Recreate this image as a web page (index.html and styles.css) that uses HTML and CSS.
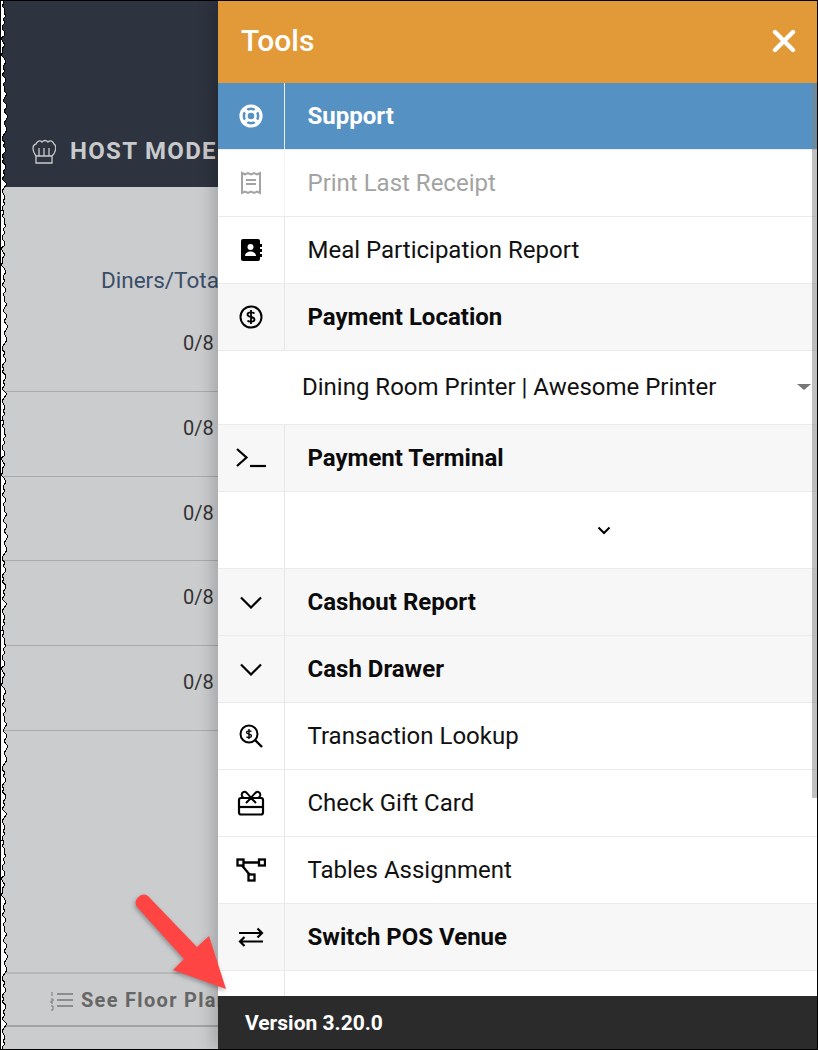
FILE: index.html
```html
<!DOCTYPE html>
<html lang="en">
<head>
<meta charset="utf-8">
<title>Tools</title>
<link rel="stylesheet" href="styles.css">
</head>
<body>
<div class="shot">
  <div class="page">
    <header class="page-head">
      <svg class="chef" viewBox="0 0 24 25" width="24" height="25" fill="none" stroke="#c9cacc" stroke-width="1.3"><path d="M4 17C0 12 0 6 4 5c1-3 4-4 6-2 2-2 4-2 6 0 2-2 5-1 6 2 3 2 2 8-2 12"/><path d="M4 17h16v7H4zM7 9v8M12 9v8M17 9v8"/></svg>
      <span class="mode">HOST MODE</span>
    </header>
    <main class="table">
      <div class="col-title">Diners/Total</div>
      <div class="t-row">0/8</div>
      <div class="t-row">0/8</div>
      <div class="t-row">0/8</div>
      <div class="t-row">0/8</div>
      <div class="t-row">0/8</div>
    </main>
    <footer class="floor">
      <svg viewBox="0 0 24 22" width="24" height="22" fill="none" stroke="#777" stroke-width="1.4"><path d="M7 5h16M7 11h16M7 17h16"/><path d="M2 3v4M1 10h2v2H1v2h2M1 17h2v4H1" stroke-width="1"/></svg>
      <span class="floor-label">See Floor Plan</span>
    </footer>
  </div>

  <aside class="panel">
    <div class="panel-head">
      <span class="panel-title">Tools</span>
      <svg class="close" viewBox="0 0 24 24" width="24" height="24" fill="none" stroke="#fff" stroke-width="4.4" stroke-linecap="round"><path d="M3 3l18 18M21 3L3 21"/></svg>
    </div>
    <div class="list">
      <div class="row active">
        <div class="ico"><svg viewBox="0 0 24 24" width="24" height="24" fill="none" stroke="#fff"><circle cx="12" cy="12" r="10" stroke-width="3.200"/><circle cx="12" cy="12" r="4.600" stroke-width="2.600"/><path d="M4.500 4.500l4 4M19.500 4.500l-4 4M4.500 19.500l4-4M19.500 19.500l-4-4" stroke-width="3.400"/></svg></div>
        <div class="lab">Support</div>
      </div>
      <div class="row disabled">
        <div class="ico"><svg viewBox="0 0 24 24" width="24" height="24" fill="none" stroke="#a3a3a3" stroke-width="2"><path d="M3 2l3 1.500 3-1.500 3 1.500 3-1.500 3 1.500 3-1.500v20l-3-1.500-3 1.500-3-1.500-3 1.500-3-1.500-3 1.500z"/><path d="M7 9h10M7 13h10" stroke-width="1.800"/></svg></div>
        <div class="lab">Print Last Receipt</div>
      </div>
      <div class="row">
        <div class="ico"><svg viewBox="0 0 24 24" width="24" height="24"><path d="M4 1h15a2 2 0 0 1 2 2v18a2 2 0 0 1-2 2H4a2 2 0 0 1-2-2V3a2 2 0 0 1 2-2z" fill="#000"/><path d="M21 6h2v3h-2zM21 11h2v3h-2zM21 16h2v3h-2z" fill="#000"/><circle cx="11.500" cy="9" r="3" fill="#fff"/><path d="M6 18c0-6 11-6 11 0z" fill="#fff"/></svg></div>
        <div class="lab">Meal Participation Report</div>
      </div>
      <div class="row head">
        <div class="ico"><svg viewBox="0 0 24 24" width="24" height="24" fill="none" stroke="#000" stroke-width="2"><circle cx="12" cy="12" r="10.500"/><path d="M15.500 8.500c-1-1.500-7-2-7 1 0 3.500 7 1.500 7 5 0 3-6 2.500-7 1M12 5v14" stroke-width="1.800"/></svg></div>
        <div class="lab">Payment Location</div>
      </div>
      <div class="row select-row">
        <div class="ico"></div>
        <div class="sel-text">Dining Room Printer | Awesome Printer</div>
        <span class="caret"></span>
      </div>
      <div class="row head">
        <div class="ico"><svg viewBox="0 0 32 24" width="32" height="24" fill="none" stroke="#000" stroke-width="2.200"><path d="M2 3l9.500 8.500L2 20"/><path d="M15 20h16"/></svg></div>
        <div class="lab">Payment Terminal</div>
      </div>
      <div class="row term-row">
        <div class="ico"></div>
        <div class="term-sel"><svg viewBox="0 0 14 9" width="14" height="9" fill="none" stroke="#000" stroke-width="2"><path d="M1.500 1.500L7 7l5.500-5.500"/></svg></div>
      </div>
      <div class="row head">
        <div class="ico"><svg viewBox="0 0 22 13" width="22" height="13" fill="none" stroke="#000" stroke-width="2.200"><path d="M1 1.500l10 10 10-10"/></svg></div>
        <div class="lab">Cashout Report</div>
      </div>
      <div class="row head">
        <div class="ico"><svg viewBox="0 0 22 13" width="22" height="13" fill="none" stroke="#000" stroke-width="2.200"><path d="M1 1.500l10 10 10-10"/></svg></div>
        <div class="lab">Cash Drawer</div>
      </div>
      <div class="row">
        <div class="ico"><svg viewBox="0 0 24 24" width="24" height="24" fill="none" stroke="#000" stroke-width="2"><circle cx="10" cy="10" r="8.500"/><path d="M16 16l7 7" stroke-width="2.400"/><path d="M12.500 7.500c-1-1-5-1-5 1s5 1 5 3.200-4 2-5 1M10 5v10" stroke-width="1.400"/></svg></div>
        <div class="lab">Transaction Lookup</div>
      </div>
      <div class="row">
        <div class="ico"><svg viewBox="0 0 28 26" width="28" height="26" fill="none" stroke="#000" stroke-width="2.200"><rect x="2" y="8" width="24" height="16.500" rx="2"/><path d="M2 17h24"/><path d="M14 8C11 4 9 1 6.500 2S4 7 7 8M14 8c3-4 5-7 7.500-6S24 7 21 8M14 8l-5 5M14 8l5 5" stroke-width="2"/></svg></div>
        <div class="lab">Check Gift Card</div>
      </div>
      <div class="row">
        <div class="ico"><svg viewBox="0 0 30 24" width="30" height="24" fill="none" stroke="#000" stroke-width="2.300"><rect x="1.500" y="1.500" width="6" height="6"/><rect x="23" y="1.500" width="6" height="6"/><rect x="12.500" y="16.500" width="6" height="6"/><path d="M7.500 4.500H23M6 7.500l7.500 9"/></svg></div>
        <div class="lab">Tables Assignment</div>
      </div>
      <div class="row head">
        <div class="ico"><svg viewBox="0 0 26 22" width="26" height="22" fill="none" stroke="#000" stroke-width="2.200"><path d="M1 7h23M19.500 2.500L24 7l-4.500 4.500M25 15.500H2M6.500 11L2 15.500 6.500 20"/></svg></div>
        <div class="lab">Switch POS Venue</div>
      </div>
      <div class="row last"><div class="ico"></div></div>
      <div class="thumb"></div>
    </div>
    <div class="panel-foot">Version 3.20.0</div>
  </aside>

  <svg class="arrow" viewBox="0 0 818 1050" width="818" height="1050">
    <path class="arrow-shape" d="M137 907a8 8 0 0 1 11-11l49 51 12-11 17 53-53-19 11-11z"/>
  </svg>

  <svg class="torn" viewBox="0 0 8 1050" width="8" height="1050">
    <defs>
      <pattern id="tear" patternUnits="userSpaceOnUse" width="8" height="210">
        <path class="tear-edge" d="M0 0H3L4 3 2 6 5 9 4 13 6 16 3 19 5 23 2 26 3 30 5 32 4 36 1 38 3 42 5 45 2 49 3 52 1 55 4 58 6 62 4 65 3 68 5 71 2 75 5 78 6 81 3 84 5 88 4 91 7 94 5 97 3 101 6 104 7 107 4 111 6 114 8 116 6 120 4 123 6 127 7 130 5 133 3 136 2 139 5 143 3 146 6 149 5 152 2 156 4 159 2 162 6 165 5 169 3 172 5 175 2 179 5 182 7 184 4 188 2 191 4 195 5 198 3 201 5 204 2 207 3 210H0Z"/>
      </pattern>
    </defs>
    <rect class="tear-fill" width="8" height="1050"/>
  </svg>
</div>
</body>
</html>
```

FILE: styles.css
```css
* { box-sizing: border-box; }
html, body { margin: 0; padding: 0; background: #fff; }
body { font-family: Roboto, "Liberation Sans", sans-serif; }

.shot {
  position: relative;
  width: 818px;
  height: 1050px;
  overflow: hidden;
  background: #cbccce;
  border-top: 1px solid #000;
  border-right: 1px solid #000;
  border-bottom: 1px solid #000;
}

.page {
  display: flex;
  flex-direction: column;
  height: 100%;
  color: #333;
}
.page-head {
  height: 186px;
  flex: none;
  background: #2d333f;
  display: flex;
  align-items: flex-end;
  gap: 14px;
  padding: 0 0 22px 32px;
}
.chef { margin-bottom: 1px; }
.mode {
  font-size: 24px;
  font-weight: 700;
  letter-spacing: 1.3px;
  color: #c9cacc;
  line-height: 28px;
  white-space: nowrap;
}
.table { flex: none; height: 786px; }
.col-title {
  height: 120px;
  padding: 79px 0 0 101px;
  font-size: 22.500px;
  line-height: 28px;
  color: #3a4d68;
  white-space: nowrap;
}
.t-row {
  height: 84.8px;
  padding: 24px 0 0 183px;
  font-size: 20px;
  line-height: 24px;
  color: #333;
  border-bottom: 1px solid #a9aaac;
}
.t-row:first-of-type { height: 84px; padding-top: 26px; }
.floor {
  height: 55px;
  flex: none;
  margin-top: -1px;
  border-top: 2px solid #b7b8ba;
  border-bottom: 2px solid #a2a3a5;
  display: flex;
  align-items: center;
  gap: 7px;
  padding-left: 50px;
}
.floor-label {
  font-size: 20px;
  font-weight: 700;
  letter-spacing: 1.300px;
  color: #666;
  white-space: nowrap;
}

.panel {
  position: absolute;
  top: 0;
  right: 0;
  bottom: 0;
  width: 599px;
  background: #fff;
  display: flex;
  flex-direction: column;
  box-shadow: -6px 0 14px rgba(0, 0, 0, .18);
}
.panel-head {
  height: 82px;
  flex: none;
  background: #e29a38;
  display: flex;
  align-items: center;
  justify-content: space-between;
  padding: 0 21px 4px 23px;
  color: #fff;
}
.panel-title { font-size: 30px; font-weight: 500; }
.close { display: block; margin-top: 2px; }

.list { position: relative; flex: 1; overflow: hidden; }
.row {
  display: flex;
  align-items: stretch;
  height: 67px;
  border-bottom: 1px solid #ebebeb;
  font-size: 24px;
  color: #111;
}
.ico {
  flex: none;
  width: 67px;
  border-right: 1px solid #e6e6e6;
  display: flex;
  align-items: center;
  justify-content: center;
}
.ico svg { display: block; }
.lab {
  flex: 1;
  padding-left: 22.500px;
  display: flex;
  align-items: center;
  white-space: nowrap;
}
.head { background: #f7f7f7; }
.head .lab { font-weight: 700; color: #0b0b0b; }
.active { background: #5592c3; color: #fff; }
.active .ico { border-right-color: #e8eff6; }
.active .lab { font-weight: 700; color: #fff; }
.disabled { color: #a3a3a3; }
.disabled .ico { border-right-color: #f5f5f5; }
.select-row { height: 74px; position: relative; }
.select-row .ico { border-right-color: #fff; }
.sel-text {
  padding: 0 0 2px 17px;
  display: flex;
  align-items: center;
  white-space: nowrap;
}
.caret {
  position: absolute;
  right: 6px;
  top: 33px;
  width: 0;
  height: 0;
  border-left: 7px solid transparent;
  border-right: 7px solid transparent;
  border-top: 6px solid #777;
}
.term-row { height: 77px; }
.term-sel {
  flex: 1;
  display: flex;
  align-items: center;
  padding: 1px 0 0 312px;
}
.last { height: 26px; border-bottom: none; }
.thumb {
  position: absolute;
  top: 0;
  right: 0;
  width: 5px;
  height: 715px;
  background: rgba(130, 130, 130, .5);
}
.panel-foot {
  height: 53px;
  flex: none;
  background: #2b2b2b;
  color: #fff;
  font-size: 21px;
  font-weight: 700;
  display: flex;
  align-items: center;
  padding-left: 27px;
}

.arrow { position: absolute; top: -1px; left: 0; pointer-events: none; }
.arrow-shape { fill: #ff4444; filter: drop-shadow(-1px 2px 2px rgba(0, 0, 0, .3)); }
.torn { position: absolute; top: -1px; left: 0; pointer-events: none; }
.tear-edge { fill: #fff; stroke: #000; stroke-width: 1; shape-rendering: crispEdges; }
.tear-fill { fill: url(#tear); }
```
